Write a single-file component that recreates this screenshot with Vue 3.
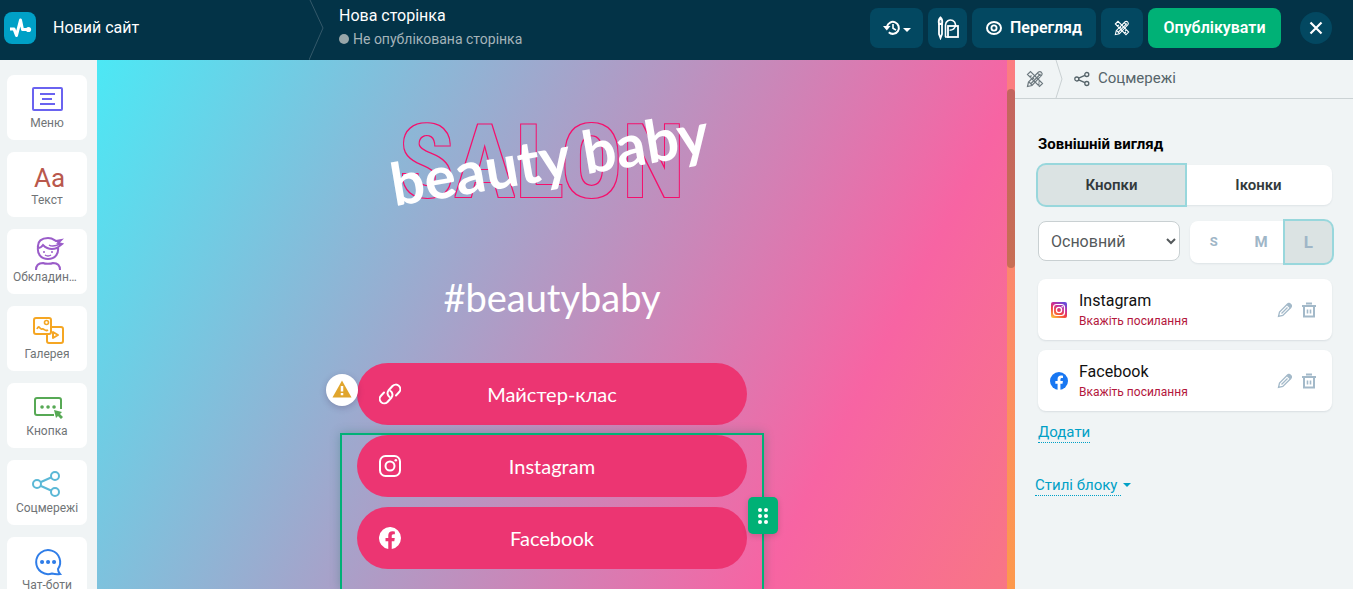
<script setup>
import { ref } from 'vue'

const blocks = [
  { id: 'menu', label: 'Меню' },
  { id: 'text', label: 'Текст' },
  { id: 'cover', label: 'Обкладинка' },
  { id: 'gallery', label: 'Галерея' },
  { id: 'button', label: 'Кнопка' },
  { id: 'social', label: 'Соцмережі' },
  { id: 'chat', label: 'Чат-боти' },
]

const view = ref('buttons')
const size = ref('L')
const kind = ref('main')
const networks = [
  { id: 'instagram', name: 'Instagram' },
  { id: 'facebook', name: 'Facebook' },
]
</script>

<template>
  <div class="editor">
    <header class="topbar">
      <a href="#" class="brand" aria-label="Головна">
        <svg width="32" height="32" viewBox="0 0 32 32">
          <rect width="32" height="32" rx="8" fill="#00a0c6" />
          <path d="M6 17h4l2.500 6.500L16.500 8l2 9.500h6" fill="none" stroke="#fff" stroke-width="3" stroke-linejoin="round" />
          <circle cx="24.500" cy="17.500" r="2.600" fill="#fff" />
        </svg>
      </a>
      <span class="site">Новий сайт</span>
      <svg class="chevron" width="16" height="60" viewBox="0 0 16 60"><path d="M1 0l13 28L0 60" fill="none" stroke="#34596a" /></svg>
      <div class="page">
        <span class="page-name">Нова сторінка</span>
        <span class="status"><i class="dot"></i>Не опублікована сторінка</span>
      </div>
      <nav class="actions">
        <button class="act history" aria-label="Історія">
          <svg width="18" height="16" viewBox="0 0 18 16" fill="none" stroke="#fff" stroke-width="2">
            <path d="M4 6.500a6 6 0 1 1 1.800 5.800" /><path d="M0 6h7.500L3.800 10.500z" fill="#fff" stroke="none" /><path d="M10 4v4.200l3 2" stroke-width="1.600" />
          </svg>
          <svg class="caret" width="8" height="5" viewBox="0 0 8 5"><path d="M0 0h8L4 4z" fill="#fff" /></svg>
        </button>
        <button class="act design" aria-label="Дизайн">
          <svg width="24" height="24" viewBox="0 0 24 24" fill="none" stroke="#fff" stroke-width="1.800">
            <path d="M4.500 1.500C2.500 3.500 2.200 5 3 8h3C6.800 5 6.500 3.500 4.500 1.500z" fill="#fff" fill-opacity=".35" /><path d="M3 8v10l1.500 4L6 18V8" />
            <rect x="12" y="10" width="10" height="11" /><path d="M9.500 21V9a5 5 0 1 1 8 4c-1 .8-2 1.200-4 1.200M9 21h4" stroke-width="1.600" />
          </svg>
        </button>
        <button class="act preview">
          <svg width="16" height="16" viewBox="0 0 16 16" fill="none" stroke="#fff" stroke-width="2">
            <ellipse cx="8" cy="8" rx="7" ry="6" /><circle cx="8" cy="8" r="2.600" stroke-width="1.800" />
          </svg>
          Перегляд
        </button>
        <button class="act tools" aria-label="Інструменти">
          <svg width="16" height="16" viewBox="0 0 18 18" fill="none" stroke="currentColor" stroke-width="1.200">
            <path d="M1.500 4.500l3-3 12 12-3 3zM4 7l1.500-1.500M6.500 9.500L8 8M12 15l1.500-1.500M14 11l-1.500 1.500" />
            <path d="M1.500 16.500l1-4.500L12.500 2q1.500-1 2.800.2 1.500 1.500.4 3L6 15.500zM3 12l3 3M5 13.500L14.500 4M11.500 3l3.500 3.500" />
          </svg>
        </button>
        <button class="act publish">Опублікувати</button>
      </nav>
      <button class="close" aria-label="Закрити">
        <svg width="14" height="14" viewBox="0 0 14 14"><path d="M1.500 1.500l11 11M12.500 1.500l-11 11" stroke="#fff" stroke-width="2.200" /></svg>
      </button>
    </header>

    <div class="work">
      <aside class="palette">
        <button v-for="b in blocks" :key="b.id" class="tile" :class="b.id">
          <svg width="34" height="34" viewBox="0 0 34 34" fill="none" stroke="currentColor" stroke-width="2">
            <g v-if="b.id === 'menu'"><rect x="3" y="6" width="29" height="22" rx="1" /><path d="M10 12h15M12 17h10M10 22h15" /></g>
            <g v-else-if="b.id === 'text'">
              <text x="4" y="28" class="aa">Aa</text>
            </g>
            <g v-else-if="b.id === 'cover'">
              <path d="M8 11c-1 7 3 12 10 12s11-5 10-12M8 12C7 5 12 2 18 2c5 0 6 2 8 3l5-1-3 3 4 1-5 4c-5 2-10 1-14-3-2 3-4 3-5 3z" />
              <path d="M19 9c3 2 7 1 11-1M14 15v2M22 15v2M15 19q3 2 6 0" stroke-width="1.500" />
              <path d="M6 34c0-5 3-7 7-7 2 1 8 1 10 0 4 0 7 2 7 7" />
            </g>
            <g v-else-if="b.id === 'gallery'">
              <path d="M17 22v6q0 2 2 2h12q2 0 2-2V16q0-2-2-2h-9" /><rect x="4" y="5" width="17" height="16" rx="2" />
              <circle cx="16.500" cy="9.500" r="2" stroke-width="1.600" /><path d="M7 16c2-5 3 1 5 0s3 3 6 1" stroke-width="1.800" /><path d="M23 19v6l5-3z" stroke-linejoin="round" />
            </g>
            <g v-else-if="b.id === 'button'">
              <path d="M24 25H7q-2 0-2-2V10q0-2 2-2h22q2 0 2 2v9" /><path d="M12 17h.1M18 17h.1M24 17h.1" stroke-width="3.500" stroke-linecap="round" />
              <path d="M24 20l8 2-2 2 3 3-2 2-3-3-2 2z" fill="currentColor" stroke="none" />
            </g>
            <g v-else-if="b.id === 'social'"><circle cx="7" cy="17" r="4" /><circle cx="25" cy="9" r="4" /><circle cx="25" cy="25" r="4" /><path d="M11 15l10-4.500M11 19l10 4.500" /></g>
            <g v-else><path d="M28 25a12 12 0 1 0-6 4.500q4 1 8 .5-2-2-2-5z" /><path d="M12 18h.1M18 18h.1M24 18h.1" stroke-width="4" stroke-linecap="round" /></g>
          </svg>
          <span>{{ b.label }}</span>
        </button>
      </aside>

      <main class="canvas">
        <div class="scene">
          <svg class="logo" width="340" height="135" viewBox="0 0 340 135">
            <defs>
              <filter id="outline" x="-5%" y="-5%" width="110%" height="110%" color-interpolation-filters="sRGB">
                <feMorphology in="SourceGraphic" operator="dilate" radius="1" result="grown" />
                <feComposite in="grown" in2="SourceAlpha" operator="out" />
              </filter>
            </defs>
            <text class="salon" x="160" y="107" text-anchor="middle" filter="url(#outline)">SALON</text>
            <text class="script" x="168" y="90" text-anchor="middle" transform="rotate(-9.500 168 72)">beauty baby</text>
          </svg>
          <h1>#beautybaby</h1>
          <div class="linkwrap">
            <button class="pill">
              <svg width="22" height="22" viewBox="0 0 22 22" fill="none" stroke="#fff" stroke-width="2" stroke-linecap="round">
                <path d="M10.500 14a4.500 4.500 0 0 1-1-6.500l4-4.500a4.500 4.500 0 0 1 6.500 6.300l-3 3.200" /><path d="M11.500 8a4.500 4.500 0 0 1 1 6.500l-4 4.500A4.500 4.500 0 0 1 2 12.700l3-3.200" />
              </svg>
              <span>Майстер-клас</span>
            </button>
            <span class="warn">
              <svg width="20" height="18" viewBox="0 0 20 18"><path d="M10 0.500L19.500 17.500H.5z" fill="#e0a52d" /><path d="M10 6v5.500M10 13v2.200" stroke="#fff" stroke-width="2.500" /></svg>
            </span>
          </div>
          <section class="selected">
            <button v-for="n in networks" :key="n.id" class="pill">
              <svg v-if="n.id === 'instagram'" width="22" height="22" viewBox="0 0 22 22" fill="none" stroke="#fff" stroke-width="2">
                <rect x="1" y="1" width="20" height="20" rx="5.500" /><circle cx="11" cy="11" r="4.500" /><circle cx="16.800" cy="5.200" r="1.300" fill="#fff" stroke="none" />
              </svg>
              <svg v-else width="22" height="22" viewBox="0 0 24 24"><path fill="#fff" d="M24 12a12 12 0 1 0-13.900 11.900v-8.400H7.100V12h3V9.400c0-3 1.800-4.700 4.500-4.700 1.300 0 2.700.3 2.700.3v2.900h-1.500c-1.500 0-1.900.9-1.900 1.900V12h3.300l-.5 3.500h-2.800v8.400A12 12 0 0 0 24 12z" /></svg>
              <span>{{ n.name }}</span>
            </button>
            <button class="handle" aria-label="Перемістити">
              <svg width="10" height="16" viewBox="0 0 10 16" fill="#fff">
                <circle cx="2" cy="2" r="2" /><circle cx="8" cy="2" r="2" /><circle cx="2" cy="8" r="2" /><circle cx="8" cy="8" r="2" /><circle cx="2" cy="14" r="2" /><circle cx="8" cy="14" r="2" />
              </svg>
            </button>
          </section>
        </div>
        <div class="track"><div class="thumb"></div></div>
      </main>

      <aside class="panel">
        <nav class="crumbs">
          <a href="#" class="root" aria-label="Інструменти">
            <svg width="18" height="18" viewBox="0 0 18 18" fill="none" stroke="currentColor" stroke-width="1.200">
              <path d="M1.500 4.500l3-3 12 12-3 3zM4 7l1.500-1.500M6.500 9.500L8 8M12 15l1.500-1.500M14 11l-1.500 1.500" />
              <path d="M1.500 16.500l1-4.500L12.500 2q1.500-1 2.800.2 1.500 1.500.4 3L6 15.500zM3 12l3 3M5 13.500L14.500 4M11.500 3l3.500 3.500" />
            </svg>
          </a>
          <svg class="sep" width="8" height="38" viewBox="0 0 8 38"><path d="M1 0l6 19-6 19" fill="none" stroke="#c9d0d2" /></svg>
          <svg width="16" height="16" viewBox="0 0 16 16" fill="none" stroke="currentColor" stroke-width="1.300">
            <circle cx="2.800" cy="8" r="2" /><circle cx="12.800" cy="3.500" r="2" /><circle cx="12.800" cy="12.500" r="2" /><path d="M4.700 7.200l6.200-2.900M4.700 8.800l6.200 2.900" />
          </svg>
          <span>Соцмережі</span>
        </nav>
        <div class="form">
          <h2>Зовнішній вигляд</h2>
          <div class="seg">
            <button :class="{ on: view === 'buttons' }" @click="view = 'buttons'">Кнопки</button>
            <button :class="{ on: view === 'icons' }" @click="view = 'icons'">Іконки</button>
          </div>
          <div class="row">
            <select v-model="kind" aria-label="Стиль кнопок">
              <option value="main">Основний</option>
            </select>
            <div class="seg sizes">
              <button class="s" :class="{ on: size === 'S' }" @click="size = 'S'">S</button>
              <button class="m" :class="{ on: size === 'M' }" @click="size = 'M'">M</button>
              <button class="l" :class="{ on: size === 'L' }" @click="size = 'L'">L</button>
            </div>
          </div>
          <ul class="list">
            <li v-for="n in networks" :key="n.id">
              <svg v-if="n.id === 'instagram'" width="18" height="18" viewBox="0 0 18 18" fill="none" stroke="#fff">
                <defs>
                  <linearGradient id="ig" x1="0.100" y1="1" x2="0.700" y2="0"><stop offset="0" stop-color="#fdc83f" /><stop offset=".4" stop-color="#f4443c" /><stop offset=".7" stop-color="#c82d9b" /><stop offset="1" stop-color="#6a4bd8" /></linearGradient>
                </defs>
                <rect x="1" y="1" width="16" height="16" rx="2" fill="url(#ig)" stroke="none" />
                <rect x="3.500" y="3.500" width="11" height="11" rx="3" stroke-width="1.200" /><circle cx="9" cy="9" r="2.600" stroke-width="1.300" /><circle cx="12.200" cy="5.800" r=".8" fill="#fff" stroke="none" />
              </svg>
              <svg v-else width="18" height="18" viewBox="0 0 24 24"><circle cx="12" cy="12" r="12" fill="#1877f2" /><path fill="#fff" d="M10.100 23.900v-8.400H7.100V12h3V9.400c0-3 1.800-4.700 4.500-4.700 1.300 0 2.700.3 2.700.3v2.900h-1.500c-1.500 0-1.900.9-1.900 1.900V12h3.300l-.5 3.500h-2.800v8.400z" /></svg>
              <div class="info"><b>{{ n.name }}</b><small>Вкажіть посилання</small></div>
              <button class="ic" aria-label="Редагувати">
                <svg width="16" height="16" viewBox="0 0 16 16" fill="none" stroke="#a3b9c9" stroke-width="1.300"><path d="M1.500 14.500l1-4.500 8-8q1.300-1 2.500.2l.8.8q1 1.200 0 2.500l-8 8zM4.500 11.500l6-6" /><path d="M9.500 3l2-2q1-.5 2 .5l1 1q1 1 .3 2l-1.800 2z" fill="#a3b9c9" stroke="none" /></svg>
              </button>
              <button class="ic" aria-label="Видалити">
                <svg width="16" height="16" viewBox="0 0 16 16" fill="none" stroke="#a3b9c9" stroke-width="2"><path d="M1 4h14M5 1.500h6M3 4v10.500h10V4" /><path d="M6.500 7.500v4M9.500 7.500v4" stroke-width="1.600" /></svg>
              </button>
            </li>
          </ul>
          <a href="#" class="dotted">Додати</a>
          <a href="#" class="styles"><span class="dotted">Стилі блоку&nbsp;</span><svg width="8" height="5" viewBox="0 0 8 5"><path d="M0 0h8L4 4z" fill="#00a0c6" /></svg></a>
        </div>
      </aside>
    </div>
  </div>
</template>

<style>
html,
body {
  margin: 0;
  overflow: hidden;
}
</style>

<style scoped>
.editor {
  display: flex;
  flex-direction: column;
  height: 100vh;
  overflow: hidden;
  font: 16px/20px Roboto, "Noto Sans", sans-serif;
  background: #f0f4f5;
}
.editor * {
  box-sizing: border-box;
}
button,
select {
  font: inherit;
  border: 0;
  margin: 0;
  padding: 0;
  cursor: pointer;
}
svg {
  display: block;
  flex: none;
}
a {
  text-decoration: none;
}

.topbar {
  flex: none;
  display: flex;
  align-items: center;
  height: 60px;
  padding: 0 21px 4px 4px;
  background: #033347;
  color: #fff;
}
.site {
  width: 256px;
  margin-left: 17px;
}
.chevron {
  margin-bottom: -4px;
}
.page {
  display: flex;
  flex-direction: column;
  gap: 3px;
  margin: 0 auto 0 14px;
  padding-bottom: 2px;
}
.status {
  display: flex;
  align-items: center;
  gap: 4px;
  font-size: 14px;
  color: #a5b4ba;
}
.dot {
  width: 10px;
  height: 10px;
  border-radius: 50%;
  background: #98a6a9;
}
.actions {
  display: flex;
  gap: 5px;
}
.act {
  display: flex;
  align-items: center;
  justify-content: center;
  gap: 8px;
  height: 40px;
  border-radius: 8px;
  background: #034861;
  color: #fff;
  font-weight: 600;
}
.history {
  width: 53px;
  gap: 2px;
}
.caret {
  margin-top: 4px;
}
.design {
  width: 39px;
}
.preview {
  width: 124px;
}
.tools {
  width: 42px;
}
.publish {
  width: 133px;
  background: #00b176;
}
.close {
  display: grid;
  place-items: center;
  width: 32px;
  height: 32px;
  margin-left: 19px;
  border-radius: 50%;
  background: #034861;
}

.work {
  flex: 1;
  display: flex;
  min-height: 0;
}
.palette {
  flex: none;
  display: flex;
  flex-direction: column;
  gap: 12px;
  width: 97px;
  padding: 15px 10px 0 7px;
  overflow: hidden;
}
.tile {
  flex: none;
  display: flex;
  flex-direction: column;
  align-items: center;
  height: 65px;
  padding: 7px 6px 0;
  border-radius: 7px;
  background: #fff;
}
.tile span {
  max-width: 100%;
  overflow: hidden;
  text-overflow: ellipsis;
  white-space: nowrap;
  font-size: 12px;
  line-height: 14px;
  color: #707476;
}
.aa {
  font: 26px Roboto, sans-serif;
  fill: currentColor;
  stroke: none;
}
.menu { color: #6a63f0; }
.text { color: #b9584c; }
.cover { color: #9a5cc9; }
.gallery { color: #f5a623; }
.button { color: #57a955; }
.social { color: #5bb8d6; }
.chat { color: #2f7de8; }

.canvas {
  flex: 1;
  display: flex;
  min-width: 0;
}
.scene {
  flex: 1;
  display: flex;
  flex-direction: column;
  align-items: center;
  padding-top: 30px;
  overflow: hidden;
  background: linear-gradient(117deg, #4ce8f5 0%, #f764a3 79%, #f87685 100%);
  font-family: Lato, "Noto Sans", sans-serif;
  color: #fff;
}
.track {
  flex: none;
  width: 8px;
  padding-top: 29px;
  background: linear-gradient(#fb7c82, #fd994c);
}
.thumb {
  height: 179px;
  border-radius: 4px;
  background: linear-gradient(#c4655f, #c86e54);
}
.salon {
  font: bold 102px "Liberation Sans Narrow", "Roboto Condensed", Roboto, sans-serif;
  fill: #f50f6c;
}
.script {
  font: bold 59px Lato, sans-serif;
  fill: #fff;
}
.logo {
  overflow: visible;
}
h1 {
  margin: 46px 0 40px;
  font-size: 38px;
  line-height: 52px;
  font-weight: 400;
}
.linkwrap {
  position: relative;
  width: 390px;
  margin-bottom: 8px;
}
.pill {
  display: flex;
  align-items: center;
  width: 100%;
  height: 62px;
  padding: 0 22px;
  border-radius: 31px;
  background: #ec3572;
  color: #fff;
  font-size: 20px;
}
.pill span {
  flex: 1;
  padding-right: 22px;
  text-align: center;
}
.warn {
  position: absolute;
  left: -31px;
  top: 11px;
  display: grid;
  place-items: center;
  width: 32px;
  height: 32px;
  padding-bottom: 3px;
  border-radius: 50%;
  background: #fff;
  box-shadow: 0 2px 6px rgba(60, 40, 80, 0.25);
}
.selected {
  position: relative;
  flex: 1;
  display: flex;
  flex-direction: column;
  gap: 10px;
  width: 424px;
  padding: 0 15px;
  border: 2px solid #00b176;
  border-bottom: 0;
  box-shadow: 0 0 10px rgba(0, 110, 90, 0.3);
}
.handle {
  position: absolute;
  right: -16px;
  top: 62px;
  display: grid;
  place-items: center;
  width: 30px;
  height: 37px;
  border-radius: 5px;
  background: #00b176;
  box-shadow: 0 2px 6px rgba(0, 0, 0, 0.15);
}

.panel {
  flex: none;
  width: 338px;
}
.crumbs {
  display: flex;
  align-items: center;
  height: 39px;
  padding-left: 11px;
  border-bottom: 1px solid #cbd2d4;
  font-size: 15px;
  color: #56646a;
}
.root {
  color: #6d797f;
}
.sep {
  margin: 0 11px;
}
.crumbs span {
  margin: 0 0 2px 8px;
}
.form {
  padding: 35px 21px 0 23px;
}
h2 {
  margin: 0 0 11px;
  font-size: 15px;
  line-height: 20px;
  font-weight: 700;
}
.seg {
  display: flex;
  height: 40px;
  border-radius: 8px;
  background: #fff;
  box-shadow: 0 1px 2px rgba(0, 40, 60, 0.08);
}
.seg button {
  flex: 1;
  background: none;
  color: #333a3c;
  font-size: 15px;
  font-weight: 600;
}
.seg .on {
  background: #dbe3e3;
  box-shadow: 0 0 0 2px #98d7dc;
}
.seg button:first-child {
  border-radius: 8px 0 0 8px;
}
.seg button:last-child {
  border-radius: 0 8px 8px 0;
}
.row {
  display: flex;
  align-items: flex-start;
  gap: 10px;
  margin: 16px 0;
}
select {
  flex: 1;
  height: 40px;
  padding-left: 8px;
  border: 1px solid #c9d0d2;
  border-radius: 8px;
  background: #fff;
  color: #54595b;
}
.sizes {
  width: 142px;
  height: 42px;
}
.sizes button {
  color: #9fb6c7;
  font-weight: 700;
}
.sizes .s {
  font-size: 13px;
}
.sizes .l {
  font-size: 17px;
}
.list {
  display: flex;
  flex-direction: column;
  gap: 10px;
  margin: 0 0 11px;
  padding: 0;
  list-style: none;
}
.list li {
  display: flex;
  align-items: center;
  gap: 8px;
  height: 61px;
  padding: 0 15px 0 12px;
  border-radius: 8px;
  background: #fff;
  box-shadow: 0 1px 2px rgba(0, 40, 60, 0.1);
}
.info {
  flex: 1;
  display: flex;
  flex-direction: column;
  padding: 2px 0 0 3px;
}
.info b {
  font-weight: 400;
  color: #111;
}
.info small {
  font-size: 12px;
  color: #b3173c;
}
.ic {
  background: none;
}
.dotted {
  display: inline-block;
  border-bottom: 1px dotted #00a0c6;
  font-size: 15px;
  color: #00a0c6;
}
.styles {
  display: flex;
  align-items: center;
  gap: 2px;
  margin: 32px 0 0 -3px;
}
</style>
